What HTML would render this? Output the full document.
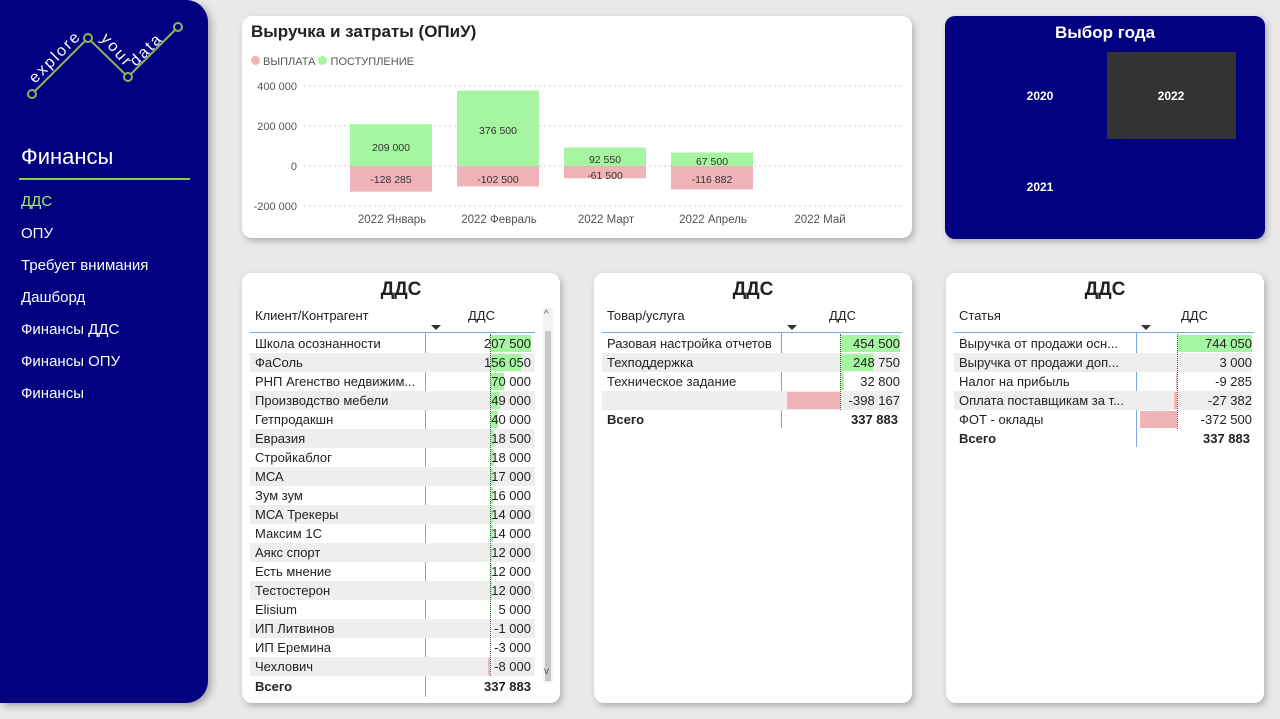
<!DOCTYPE html>
<html><head><meta charset="utf-8">
<style>
*{margin:0;padding:0;box-sizing:border-box}
body{width:1280px;height:719px;background:#e9e9e9;font-family:"Segoe UI","Liberation Sans","DejaVu Sans",sans-serif;position:relative;overflow:hidden;color:#222}
.abs{position:absolute}
.side{left:0;top:0;width:208px;height:703px;background:#000080;border-radius:0 22px 22px 0;box-shadow:3px 3px 8px rgba(0,0,0,.3)}
.nav{position:absolute;left:21px;color:#fff;font-size:15px}
.card{background:#fff;border-radius:10px;box-shadow:2px 3px 7px rgba(0,0,0,.25)}
.t{font-size:13px}
.row{position:absolute;left:0;height:19px;width:100%;font-size:13px;line-height:19px}
.g{background:#eeeeee}
.nm{position:absolute;left:0;white-space:nowrap}
.v{position:absolute;right:0;text-align:right}
.bp{position:absolute;top:1px;height:17px;background:#a6f5a0}
.bn{position:absolute;top:1px;height:17px;background:#f0b4b8}
.h2{position:absolute;width:100%;text-align:center;font-weight:bold;font-size:19px;top:6px}
</style></head><body>

<div class="abs side">
<svg width="208" height="110" style="position:absolute;left:0;top:0">
<polyline points="32,94 88,38 128,77 178,27" fill="none" stroke="#8fb45a" stroke-width="2"/>
<g fill="#000080" stroke="#8fb45a" stroke-width="2"><circle cx="32" cy="94" r="4"/><circle cx="88" cy="38" r="4"/><circle cx="128" cy="77" r="4"/><circle cx="178" cy="27" r="4"/></g>
<text x="0" y="0" fill="#fff" font-size="16" font-family="Liberation Sans" transform="translate(35,84) rotate(-45)" letter-spacing="2">explore</text>
<text x="0" y="0" fill="#fff" font-size="16" font-family="Liberation Sans" transform="translate(100,39) rotate(48)" letter-spacing="2">your</text>
<text x="0" y="0" fill="#fff" font-size="16" font-family="Liberation Sans" transform="translate(136,67) rotate(-45)" letter-spacing="2">data</text>
</svg>
<div class="nav" style="top:144px;font-size:22px">Финансы</div>
<div class="abs" style="left:19px;top:178px;width:171px;height:2px;background:#7fd04a"></div>
<div class="nav" style="top:193px;color:#9ef07a">ДДС</div>
<div class="nav" style="top:225px">ОПУ</div>
<div class="nav" style="top:257px">Требует внимания</div>
<div class="nav" style="top:289px">Дашборд</div>
<div class="nav" style="top:321px">Финансы ДДС</div>
<div class="nav" style="top:353px">Финансы ОПУ</div>
<div class="nav" style="top:385px">Финансы</div>
</div>

<!-- chart -->
<div class="abs card" style="left:242px;top:16px;width:670px;height:222px"></div>
<div class="abs" style="left:251px;top:22px;font-size:17px;font-weight:bold">Выручка и затраты (ОПиУ)</div>
<div class="abs" style="left:251px;top:56px;font-size:11px;color:#555"><span style="display:inline-block;width:9px;height:9px;border-radius:50%;background:#f0b4b8"></span> ВЫПЛАТА <span style="display:inline-block;width:9px;height:9px;border-radius:50%;background:#a6f5a0"></span> ПОСТУПЛЕНИЕ</div>
<svg class="abs" style="left:242px;top:16px" width="670" height="222">
<g stroke="#ccc" stroke-dasharray="2,3"><line x1="62" x2="662" y1="70" y2="70"/><line x1="62" x2="662" y1="110" y2="110"/><line x1="62" x2="662" y1="150" y2="150"/><line x1="62" x2="662" y1="190" y2="190"/></g>
<g font-size="11" fill="#555" text-anchor="end" font-family="Liberation Sans"><text x="55" y="74">400 000</text><text x="55" y="114">200 000</text><text x="55" y="154">0</text><text x="55" y="194">-200 000</text></g>
<g fill="#a6f5a0"><rect x="108" y="108.2" width="82" height="41.8"/><rect x="215" y="74.7" width="82" height="75.3"/><rect x="322" y="131.5" width="82" height="18.5"/><rect x="429" y="136.5" width="82" height="13.5"/></g>
<g fill="#f0b4b8"><rect x="108" y="150" width="82" height="25.7"/><rect x="215" y="150" width="82" height="20.5"/><rect x="322" y="150" width="82" height="12.3"/><rect x="429" y="150" width="82" height="23.4"/></g>
<g font-size="10.5" fill="#333" text-anchor="middle" font-family="Liberation Sans"><text x="149" y="135">209 000</text><text x="256" y="118">376 500</text><text x="363" y="147">92 550</text><text x="470" y="149">67 500</text>
<text x="149" y="167" fill="#334">-128 285</text><text x="256" y="167">-102 500</text><text x="363" y="163">-61 500</text><text x="470" y="167">-116 882</text></g>
<g font-size="11.5" fill="#555" text-anchor="middle" font-family="Liberation Sans"><text x="150" y="207">2022 Январь</text><text x="257" y="207">2022 Февраль</text><text x="364" y="207">2022 Март</text><text x="471" y="207">2022 Апрель</text><text x="578" y="207">2022 Май</text></g>
</svg>

<!-- year -->
<div class="abs card" style="left:945px;top:16px;width:320px;height:223px;background:#000080"></div>
<div class="abs" style="left:945px;width:320px;top:23px;text-align:center;color:#fff;font-weight:bold;font-size:17px">Выбор года</div>
<div class="abs" style="left:1107px;top:52px;width:129px;height:87px;background:#333"></div>
<div class="abs" style="left:1000px;width:80px;top:89px;text-align:center;color:#fff;font-weight:bold;font-size:12px">2020</div>
<div class="abs" style="left:1131px;width:80px;top:89px;text-align:center;color:#fff;font-weight:bold;font-size:12px">2022</div>
<div class="abs" style="left:1000px;width:80px;top:180px;text-align:center;color:#fff;font-weight:bold;font-size:12px">2021</div>

<!-- table 1 -->
<div class="abs card" style="left:242px;top:273px;width:318px;height:430px">
<div class="h2">ДДС</div>
<div class="abs t" style="left:13px;top:35px">Клиент/Контрагент</div>
<div class="abs t" style="left:226px;top:35px">ДДС</div>
<div class="abs" style="left:189px;top:52px;border-left:5px solid transparent;border-right:5px solid transparent;border-top:5px solid #333"></div>
<div class="abs" style="left:8px;top:59px;width:285px;height:1px;background:#7aa8e0"></div>
<div class="abs" style="left:183px;top:59px;width:1px;height:365px;background:#7aa8e0"></div>
<div class="abs" style="left:301px;top:35px;width:10px;height:375px;background:#f2f2f2"></div>
<div class="abs" style="left:303px;top:58px;width:6px;height:350px;background:#c8c8c8"></div>
<div class="abs" style="left:302px;top:36px;font-size:10px;color:#555">^</div>
<div class="abs" style="left:302px;top:393px;font-size:10px;color:#555">v</div>
<div class="abs" style="left:8px;top:61px;width:285px;height:345px">
<div class="row" style="top:0"><span class="nm" style="left:5px">Школа осознанности</span><div class="bp" style="left:240px;width:41px"></div><span class="v" style="right:4px">207 500</span></div>
<div class="row g" style="top:19px"><span class="nm" style="left:5px">ФаСоль</span><div class="bp" style="left:240px;width:31px"></div><span class="v" style="right:4px">156 050</span></div>
<div class="row" style="top:38px"><span class="nm" style="left:5px">РНП Агенство недвижим...</span><div class="bp" style="left:240px;width:14px"></div><span class="v" style="right:4px">70 000</span></div>
<div class="row g" style="top:57px"><span class="nm" style="left:5px">Производство мебели</span><div class="bp" style="left:240px;width:10px"></div><span class="v" style="right:4px">49 000</span></div>
<div class="row" style="top:76px"><span class="nm" style="left:5px">Гетпродакшн</span><div class="bp" style="left:240px;width:8px"></div><span class="v" style="right:4px">40 000</span></div>
<div class="row g" style="top:95px"><span class="nm" style="left:5px">Евразия</span><div class="bp" style="left:240px;width:4px"></div><span class="v" style="right:4px">18 500</span></div>
<div class="row" style="top:114px"><span class="nm" style="left:5px">Стройкаблог</span><div class="bp" style="left:240px;width:4px"></div><span class="v" style="right:4px">18 000</span></div>
<div class="row g" style="top:133px"><span class="nm" style="left:5px">МСА</span><div class="bp" style="left:240px;width:3px"></div><span class="v" style="right:4px">17 000</span></div>
<div class="row" style="top:152px"><span class="nm" style="left:5px">Зум зум</span><div class="bp" style="left:240px;width:3px"></div><span class="v" style="right:4px">16 000</span></div>
<div class="row g" style="top:171px"><span class="nm" style="left:5px">МСА Трекеры</span><div class="bp" style="left:240px;width:3px"></div><span class="v" style="right:4px">14 000</span></div>
<div class="row" style="top:190px"><span class="nm" style="left:5px">Максим 1С</span><div class="bp" style="left:240px;width:3px"></div><span class="v" style="right:4px">14 000</span></div>
<div class="row g" style="top:209px"><span class="nm" style="left:5px">Аякс спорт</span><div class="bp" style="left:240px;width:2px"></div><span class="v" style="right:4px">12 000</span></div>
<div class="row" style="top:228px"><span class="nm" style="left:5px">Есть мнение</span><div class="bp" style="left:240px;width:2px"></div><span class="v" style="right:4px">12 000</span></div>
<div class="row g" style="top:247px"><span class="nm" style="left:5px">Тестостерон</span><div class="bp" style="left:240px;width:2px"></div><span class="v" style="right:4px">12 000</span></div>
<div class="row" style="top:266px"><span class="nm" style="left:5px">Elisium</span><div class="bp" style="left:240px;width:1px"></div><span class="v" style="right:4px">5 000</span></div>
<div class="row g" style="top:285px"><span class="nm" style="left:5px">ИП Литвинов</span><span class="v" style="right:4px">-1 000</span></div>
<div class="row" style="top:304px"><span class="nm" style="left:5px">ИП Еремина</span><span class="v" style="right:4px">-3 000</span></div>
<div class="row g" style="top:323px"><span class="nm" style="left:5px">Чехлович</span><div class="bn" style="left:238px;width:2px"></div><span class="v" style="right:4px">-8 000</span></div>
<div class="abs" style="left:240px;top:0;height:342px;border-left:1px dotted #555"></div>
</div>
<div class="abs t" style="left:13px;top:406px;font-weight:bold;width:276px">Всего<span style="position:absolute;right:0">337 883</span></div>
</div>

<!-- table 2 -->
<div class="abs card" style="left:594px;top:273px;width:318px;height:430px">
<div class="h2">ДДС</div>
<div class="abs t" style="left:13px;top:35px">Товар/услуга</div>
<div class="abs t" style="left:235px;top:35px">ДДС</div>
<div class="abs" style="left:193px;top:52px;border-left:5px solid transparent;border-right:5px solid transparent;border-top:5px solid #333"></div>
<div class="abs" style="left:8px;top:59px;width:300px;height:1px;background:#7aa8e0"></div>
<div class="abs" style="left:187px;top:59px;width:1px;height:96px;background:#7aa8e0"></div>
<div class="abs" style="left:8px;top:61px;width:298px">
<div class="row" style="top:0"><span class="nm" style="left:5px">Разовая настройка отчетов</span><div class="bp" style="left:238px;width:60px"></div><span class="v">454 500</span></div>
<div class="row g" style="top:19px"><span class="nm" style="left:5px">Техподдержка</span><div class="bp" style="left:238px;width:33px"></div><span class="v">248 750</span></div>
<div class="row" style="top:38px"><span class="nm" style="left:5px">Техническое задание</span><div class="bp" style="left:238px;width:4px"></div><span class="v">32 800</span></div>
<div class="row g" style="top:57px"><div class="bn" style="left:185px;width:53px"></div><span class="v">-398 167</span></div>
<div class="abs" style="left:238px;top:0;height:76px;border-left:1px dotted #555"></div>
</div>
<div class="abs t" style="left:13px;top:139px;font-weight:bold;width:291px">Всего<span style="position:absolute;right:0">337 883</span></div>
</div>

<!-- table 3 -->
<div class="abs card" style="left:946px;top:273px;width:318px;height:430px">
<div class="h2">ДДС</div>
<div class="abs t" style="left:13px;top:35px">Статья</div>
<div class="abs t" style="left:235px;top:35px">ДДС</div>
<div class="abs" style="left:195px;top:52px;border-left:5px solid transparent;border-right:5px solid transparent;border-top:5px solid #333"></div>
<div class="abs" style="left:8px;top:59px;width:300px;height:1px;background:#7aa8e0"></div>
<div class="abs" style="left:190px;top:59px;width:1px;height:115px;background:#7aa8e0"></div>
<div class="abs" style="left:8px;top:61px;width:298px">
<div class="row" style="top:0"><span class="nm" style="left:5px">Выручка от продажи осн...</span><div class="bp" style="left:223px;width:75px"></div><span class="v">744 050</span></div>
<div class="row g" style="top:19px"><span class="nm" style="left:5px">Выручка от продажи доп...</span><span class="v">3 000</span></div>
<div class="row" style="top:38px"><span class="nm" style="left:5px">Налог на прибыль</span><div class="bn" style="left:222px;width:1px"></div><span class="v">-9 285</span></div>
<div class="row g" style="top:57px"><span class="nm" style="left:5px">Оплата поставщикам за т...</span><div class="bn" style="left:220px;width:3px"></div><span class="v">-27 382</span></div>
<div class="row" style="top:76px"><span class="nm" style="left:5px">ФОТ - оклады</span><div class="bn" style="left:186px;width:37px"></div><span class="v">-372 500</span></div>
<div class="abs" style="left:223px;top:0;height:95px;border-left:1px dotted #555"></div>
</div>
<div class="abs t" style="left:13px;top:158px;font-weight:bold;width:291px">Всего<span style="position:absolute;right:0">337 883</span></div>
</div>
</body></html>
